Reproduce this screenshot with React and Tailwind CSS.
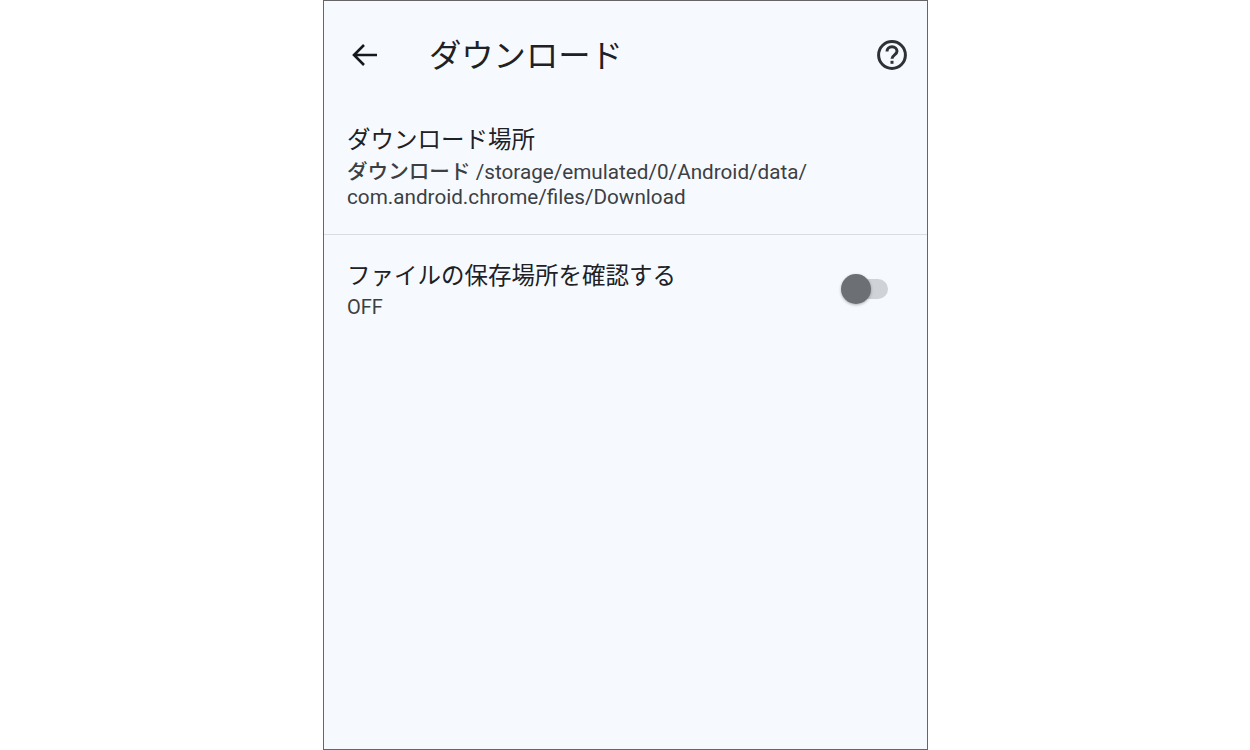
const cjk = "font-['Roboto','Noto_Sans_CJK_JP',sans-serif]";

const App = () => {
  return (
    <div className="h-[750px] w-[1250px] bg-white flex justify-center">
      <div className={`${cjk} ml-[1px] h-[750px] w-[605px] border border-[#666666] bg-[#f6faff] flex flex-col`}>
        {/* Toolbar */}
        <div className="h-[107px] flex items-center shrink-0 pl-[26px] pr-[19px]">
          <svg width="30" height="30" viewBox="0 0 30 30" fill="none" stroke="#17181b" strokeWidth="2.6" className="shrink-0">
            <path d="M27 15H4M14 5L4 15l10 10" />
          </svg>
          <h1 className="ml-[49px] mt-[3px] text-[32.3px] leading-[40px] text-[#202124] flex-1">ダウンロード</h1>
          <svg width="32" height="32" viewBox="0 0 32 32" fill="none" stroke="#2f3235" strokeWidth="3" className="shrink-0">
            <circle cx="16" cy="16" r="13.4" />
            <path d="M11 12.6c0-2.9 2.2-4.8 5-4.8s5 1.9 5 4.4c0 3.6-5 3.7-5 7.6" />
            <path d="M16 21.8v3" />
          </svg>
        </div>

        {/* Download location */}
        <div className="h-[127px] shrink-0 border-b border-[#d9dde2] px-[23px] pt-[17px]">
          <p className="text-[23.5px] leading-[30px] text-[#202124]">ダウンロード場所</p>
          <p className="mt-[5px] text-[20.7px] leading-[25px] text-[#3c4043] w-[500px]">
            <span className="text-[20.6px] font-medium">ダウンロード</span> /storage/emulated/0/Android/data/
            <br />
            com.android.chrome/files/Download
          </p>
        </div>

        {/* Confirm location toggle */}
        <div className="flex items-center justify-between pl-[23px] pr-[39px] pt-[26px]">
          <div>
            <p className="text-[23.5px] leading-[30px] text-[#202124]">ファイルの保存場所を確認する</p>
            <p className="mt-[3px] text-[20px] leading-[26px] text-[#3c4043]">OFF</p>
          </div>
          <div className="relative w-[47px] h-[20px] -mt-[3px]">
            <div className="absolute right-0 top-0 h-[20px] w-[40px] rounded-full bg-[#cfd2d6]" />
            <div className="absolute left-0 -top-[5px] h-[30px] w-[30px] rounded-full bg-[#6c7074] shadow-[0_1px_3px_rgba(0,0,0,0.3)]" />
          </div>
        </div>
      </div>
    </div>
  );
};

export default App;
